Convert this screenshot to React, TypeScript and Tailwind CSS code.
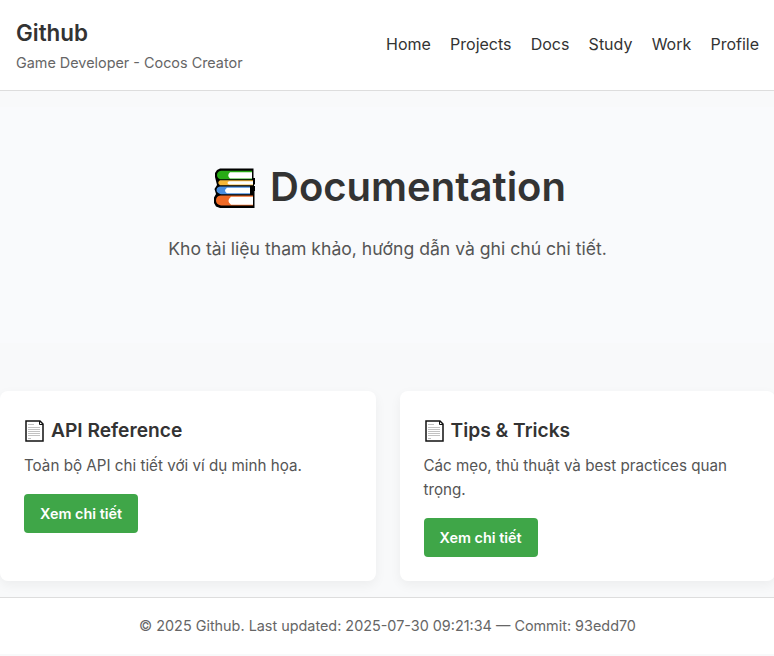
const nav = ["Home", "Projects", "Docs", "Study", "Work", "Profile"];

const cards = [
  { title: "API Reference", text: "Toàn bộ API chi tiết với ví dụ minh họa." },
  { title: "Tips & Tricks", text: "Các mẹo, thủ thuật và best practices quan trọng." },
];

function Books() {
  return (
    <svg width="42" height="40" viewBox="0 0 42 40" className="shrink-0">
      <path d="M7 0.500H40.500V10H42V16.500H41V18H42V23H41.500V40H7L3 38.500L1 35V29.500L3 26L1.500 21L4 17L3 13L2 9V5L4 2Z" fill="#000" />
      <path d="M8 2.800H39V11.200H7Q4 10 4 7Q4 3.500 8 2.800Z" fill="#28ab16" />
      <path d="M17 4.300H39V10.500H17Q13.500 7.500 17 4.300Z" fill="#fff" />
      <path d="M7 12.300H40V17.300H7Q3.500 14.700 7 12.300Z" fill="#f7b83a" />
      <path d="M16 13.300H40V16.500H16Q13 15 16 13.300Z" fill="#fff" />
      <path d="M7 18.500H37V26.200H8Q3.500 25 3.500 22Q3.500 19 7 18.500Z" fill="#4a8ee0" />
      <path d="M14 19.700H37V25.300H14Q10 22.500 14 19.700Z" fill="#fff" />
      <path d="M7.500 27.500H40V37.400H8Q3 36.500 3 32.500Q3 28 7.500 27.500Z" fill="#f06a26" />
      <path d="M18 28.700H40V36.700H18Q13 33 18 28.700Z" fill="#fff" />
    </svg>
  );
}

function Page() {
  return (
    <svg width="20" height="22" viewBox="0 0 20 22" className="shrink-0">
      <path d="M2 1H16L19 4V21H2Z" fill="#fff" />
      <path d="M4 4.500H10M4 7.500H16M4 9.500H16M4 11.500H16M4 13.500H16M4 15.500H16M4 18.500H7" stroke="#c2c2c2" />
      <path d="M2 1H16L19 4V21H2Z" fill="none" stroke="#111" strokeWidth="1.500" />
      <path d="M15.500 1V4.500H19" fill="none" stroke="#111" />
    </svg>
  );
}

export default function App() {
  return (
    <div className="w-full overflow-hidden">
      <div className="flex h-[656px] w-[775px] flex-col bg-[#f8f9fa] font-['Inter',sans-serif] text-[#333]">
        <header className="flex h-[91px] items-center justify-between border-b border-[#ddd] bg-white px-4">
          <div>
            <h1 className="text-[22.4px] leading-[34px] font-semibold">Github</h1>
            <p className="text-[14.4px] leading-[25px] text-[#666]">Game Developer - Cocos Creator</p>
          </div>
          <nav className="flex gap-[19.2px] pb-0.5 text-base">
            {nav.map((n) => <a key={n}>{n}</a>)}
          </nav>
        </header>
        <section className="mt-4 mb-12 flex h-[236px] flex-col items-center bg-[#f9fafc] pt-12">
          <h2 className="flex h-[64px] items-center gap-[15px] pl-[4px] text-[40px] font-semibold">
            <span className="pt-0.5"><Books /></span>
            <span>Documentation</span>
          </h2>
          <p className="mt-4 text-[17.6px] leading-[28px] text-[#555]">Kho tài liệu tham khảo, hướng dẫn và ghi chú chi tiết.</p>
        </section>
        <main className="grid h-[190px] grid-cols-2 gap-6">
          {cards.map((c) => (
            <article key={c.title} className="rounded-lg bg-white p-6 shadow-[0_4px_12px_rgba(0,0,0,0.05)]">
              <h3 className="flex h-[31px] items-center gap-[7px] text-[19.2px] font-semibold">
                <Page />
                <span>{c.title}</span>
              </h3>
              <p className="mt-2 text-[15.2px] leading-6 text-[#555]">{c.text}</p>
              <a className="mt-4 inline-flex h-[39px] items-center rounded bg-[#3fa648] px-4 text-[14.4px] font-semibold text-white">Xem chi tiết</a>
            </article>
          ))}
        </main>
        <footer className="mt-4 flex h-[57px] items-center justify-center border-t border-[#ddd] bg-white text-[14.4px] text-[#666]">
          © 2025 Github. Last updated: 2025-07-30 09:21:34 — Commit: 93edd70
        </footer>
      </div>
    </div>
  );
}
